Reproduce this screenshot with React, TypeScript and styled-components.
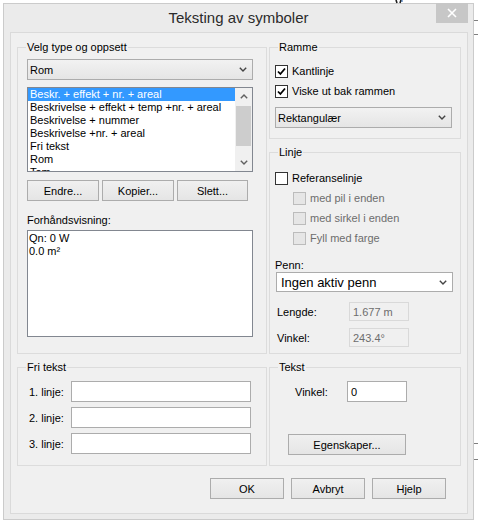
import React from 'react';
import styled, { createGlobalStyle } from 'styled-components';

const GlobalStyle = createGlobalStyle`
  html, body {
    margin: 0;
    padding: 0;
    background: #ffffff;
  }
  body {
    font-family: "Liberation Sans", Arial, sans-serif;
    font-size: 11px;
    color: #000;
  }
  * { box-sizing: border-box; }
`;

const Page = styled.div`
  position: relative;
  width: 478px;
  height: 520px;
  overflow: hidden;
  display: flex;
  align-items: flex-start;
  padding: 3px 0 0 3px;
`;

const BackGlyph = styled.svg`
  position: absolute;
  left: 394px;
  top: 0;
`;

const Window = styled.div`
  width: 471px;
  height: 517px;
  background: #ebebeb;
  border: 1px solid #cbcbcb;
  display: flex;
  flex-direction: column;
`;

const EdgeStrip = styled.div`
  flex: 1;
  display: flex;
  flex-direction: column;
`;

const EdgeTick = styled.div<{ $top: number }>`
  margin-top: ${p => p.$top}px;
  height: 1px;
  background: #7f7f7f;
`;

const TitleBar = styled.div`
  height: 28px;
  display: grid;
  grid-template-columns: 1fr auto 1fr;
  align-items: start;
`;

const Title = styled.div`
  grid-column: 2;
  font-size: 15px;
  line-height: 28px;
  color: #2b2b2b;
`;

const CloseButton = styled.div`
  grid-column: 3;
  justify-self: end;
  width: 32px;
  height: 20px;
  margin-top: -1px;
  margin-right: 5px;
  background: #c7c7c7;
  display: flex;
  align-items: center;
  justify-content: center;
`;

const Client = styled.div`
  margin: 0 5px 5px 6px;
  height: 482px;
  background: #f0f0f0;
  border: 1px solid #dadada;
  padding: 8px 6px 0 6px;
  display: grid;
  grid-template-columns: 250px 192px;
  grid-template-rows: 313px 105px auto;
  column-gap: 2px;
  row-gap: 7px;
`;

const Group = styled.fieldset<{ $h: number; $pt?: number }>`
  margin: 0;
  height: ${p => p.$h}px;
  border: 1px solid #dcdcdc;
  padding: ${p => p.$pt ?? 5}px 0 0 0;
  min-width: 0;
`;

const Legend = styled.legend`
  padding: 0 1px;
  margin-left: 8px;
  line-height: 13px;
  font-size: 11px;
`;

const Column = styled.div`
  display: flex;
  flex-direction: column;
  gap: 7px;
`;

const Stack = styled.div<{ $gap?: number; $pl?: number }>`
  display: flex;
  flex-direction: column;
  gap: ${p => p.$gap ?? 0}px;
  padding-left: ${p => p.$pl ?? 0}px;
`;

const Combo = styled.div<{ $white?: boolean; $w: number; $h?: number; $big?: boolean }>`
  width: ${p => p.$w}px;
  height: ${p => p.$h ?? 21}px;
  border: 1px solid #acacac;
  background: ${p => (p.$white ? '#ffffff' : 'linear-gradient(#f2f2f2, #e5e5e5)')};
  display: flex;
  align-items: center;
  justify-content: space-between;
  padding: 0 5px 0 ${p => (p.$big ? 4 : 2)}px;
  font-size: ${p => (p.$big ? 13 : 11)}px;
  flex-shrink: 0;
`;

const ListBox = styled.div`
  width: 226px;
  height: 85px;
  border: 1px solid #828790;
  background: #fff;
  display: flex;
  margin-top: 7px;
`;

const ListItems = styled.div`
  flex: 1;
  overflow: hidden;
`;

const ListItem = styled.div<{ $selected?: boolean }>`
  height: 13px;
  line-height: 13px;
  padding-left: 2px;
  white-space: nowrap;
  background: ${p => (p.$selected ? '#3399ff' : 'transparent')};
  color: ${p => (p.$selected ? '#fff' : '#000')};
`;

const ScrollBar = styled.div`
  width: 17px;
  background: #f0f0f0;
  display: flex;
  flex-direction: column;
  align-items: center;
`;

const ScrollArrow = styled.div`
  height: 17px;
  width: 17px;
  display: flex;
  align-items: center;
  justify-content: center;
`;

const ScrollThumb = styled.div`
  width: 15px;
  height: 40px;
  background: #cdcdcd;
  margin-top: 1px;
`;

const ScrollTrack = styled.div`
  flex: 1;
`;

const ButtonRow = styled.div<{ $gap: number }>`
  display: flex;
  gap: ${p => p.$gap}px;
`;

const Button = styled.div<{ $w: number }>`
  width: ${p => p.$w}px;
  height: 21px;
  border: 1px solid #acacac;
  background: linear-gradient(#f0f0f0, #e5e5e5);
  display: flex;
  align-items: center;
  justify-content: center;
  font-size: 11px;
`;

const Label = styled.div`
  line-height: 13px;
`;

const Preview = styled.div`
  width: 226px;
  height: 107px;
  border: 1px solid #828790;
  background: #fff;
  padding: 1px 1px;
  line-height: 13px;
`;

const FormRow = styled.div<{ $lw: number; $pl?: number }>`
  display: grid;
  grid-template-columns: ${p => p.$lw}px auto;
  align-items: center;
  padding-left: ${p => p.$pl ?? 0}px;
`;

const TextInput = styled.div<{ $w: number; $h?: number }>`
  width: ${p => p.$w}px;
  height: ${p => p.$h ?? 21}px;
  border: 1px solid #acacac;
  background: #fff;
  padding-left: 3px;
  display: flex;
  align-items: center;
`;

const ReadOnlyBox = styled.div`
  width: 60px;
  height: 19px;
  border: 1px solid #d9d9d9;
  background: #f0f0f0;
  color: #6d6d6d;
  padding-left: 3px;
  display: flex;
  align-items: center;
`;

const CheckRow = styled.div<{ $indent?: number; $disabled?: boolean }>`
  height: 20px;
  display: flex;
  align-items: center;
  gap: 4px;
  padding-left: ${p => p.$indent ?? 0}px;
  color: ${p => (p.$disabled ? '#6d6d6d' : '#000')};
`;

const Box = styled.div<{ $disabled?: boolean }>`
  width: 13px;
  height: 13px;
  border: 1px solid ${p => (p.$disabled ? '#bcbcbc' : '#333333')};
  background: ${p => (p.$disabled ? '#e6e6e6' : '#ffffff')};
  display: flex;
  align-items: center;
  justify-content: center;
`;

const Footer = styled.div`
  grid-column: 1 / span 2;
  display: flex;
  justify-content: flex-end;
  gap: 7px;
  padding-top: 5px;
  padding-right: 15px;
`;

const Chevron = ({ color = '#444' }: { color?: string }) => (
  <svg width="8" height="5" viewBox="0 0 8 5">
    <path d="M0.8 0.8 L4 4 L7.2 0.8" fill="none" stroke={color} strokeWidth="1.4" />
  </svg>
);

const ChevronUp = () => (
  <svg width="8" height="5" viewBox="0 0 8 5">
    <path d="M0.8 4.2 L4 1 L7.2 4.2" fill="none" stroke="#606060" strokeWidth="1.4" />
  </svg>
);

const Checkbox = ({ checked, disabled }: { checked?: boolean; disabled?: boolean }) => (
  <Box $disabled={disabled}>
    {checked && (
      <svg width="9" height="9" viewBox="0 0 9 9">
        <path d="M1 4.5 L3.4 7 L8 1.5" fill="none" stroke="#000" strokeWidth="1.8" />
      </svg>
    )}
  </Box>
);

const listItems = [
  'Beskr. + effekt + nr. + areal',
  'Beskrivelse + effekt + temp +nr. + areal',
  'Beskrivelse + nummer',
  'Beskrivelse +nr. + areal',
  'Fri tekst',
  'Rom',
  'Tom',
];

export default function App() {
  return (
    <Page>
      <GlobalStyle />
      <BackGlyph width="16" height="4" viewBox="0 0 16 4">
        <path d="M2 0 L3 3 M7 0 L6 3" stroke="#1d1d1d" strokeWidth="1.6" />
        <path d="M8 0 L8 2" stroke="#1f5fb0" strokeWidth="1" />
      </BackGlyph>
      <Window>
        <TitleBar>
          <Title>Teksting av symboler</Title>
          <CloseButton>
            <svg width="10" height="10" viewBox="0 0 10 10">
              <path d="M1 1 L9 9 M9 1 L1 9" stroke="#fff" strokeWidth="1.6" />
            </svg>
          </CloseButton>
        </TitleBar>
        <Client>
          <Group $h={313}>
            <Legend>Velg type og oppsett</Legend>
            <Stack $pl={9}>
              <Combo $w={226}>
                <span>Rom</span>
                <Chevron />
              </Combo>
              <ListBox>
                <ListItems>
                  {listItems.map((t, i) => (
                    <ListItem key={t} $selected={i === 0}>{t}</ListItem>
                  ))}
                </ListItems>
                <ScrollBar>
                  <ScrollArrow><ChevronUp /></ScrollArrow>
                  <ScrollThumb />
                  <ScrollTrack />
                  <ScrollArrow><Chevron color="#606060" /></ScrollArrow>
                </ScrollBar>
              </ListBox>
              <ButtonRow $gap={3} style={{ marginTop: 8 }}>
                <Button $w={72}>Endre...</Button>
                <Button $w={72}>Kopier...</Button>
                <Button $w={71}>Slett...</Button>
              </ButtonRow>
              <Label style={{ marginTop: 13 }}>Forhåndsvisning:</Label>
              <Preview style={{ marginTop: 3 }}>
                <div>Qn: 0 W</div>
                <div>0.0 m²</div>
              </Preview>
            </Stack>
          </Group>
          <Column>
            <Group $h={98} $pt={7}>
              <Legend>Ramme</Legend>
              <Stack $pl={5}>
                <CheckRow><Checkbox checked />Kantlinje</CheckRow>
                <CheckRow><Checkbox checked />Viske ut bak rammen</CheckRow>
                <Combo $w={177} style={{ marginTop: 6 }}>
                  <span>Rektangulær</span>
                  <Chevron />
                </Combo>
              </Stack>
            </Group>
            <Group $h={208} $pt={9}>
              <Legend>Linje</Legend>
              <Stack $pl={5}>
                <CheckRow><Checkbox />Referanselinje</CheckRow>
                <CheckRow $indent={18} $disabled><Checkbox disabled />med pil i enden</CheckRow>
                <CheckRow $indent={18} $disabled><Checkbox disabled />med sirkel i enden</CheckRow>
                <CheckRow $indent={18} $disabled><Checkbox disabled />Fyll med farge</CheckRow>
                <Label style={{ marginTop: 11 }}>Penn:</Label>
                <Combo $w={177} $h={20} $white $big style={{ marginLeft: 1 }}>
                  <span>Ingen aktiv penn</span>
                  <Chevron />
                </Combo>
                <Stack $gap={7} style={{ marginTop: 10 }}>
                  <FormRow $lw={72} $pl={2}>
                    <span>Lengde:</span>
                    <ReadOnlyBox>1.677 m</ReadOnlyBox>
                  </FormRow>
                  <FormRow $lw={72} $pl={2}>
                    <span>Vinkel:</span>
                    <ReadOnlyBox>243.4°</ReadOnlyBox>
                  </FormRow>
                </Stack>
              </Stack>
            </Group>
          </Column>
          <Group $h={105} $pt={7}>
            <Legend>Fri tekst</Legend>
            <Stack $gap={5} $pl={11}>
              <FormRow $lw={42}>
                <span>1. linje:</span>
                <TextInput $w={180} />
              </FormRow>
              <FormRow $lw={42}>
                <span>2. linje:</span>
                <TextInput $w={180} />
              </FormRow>
              <FormRow $lw={42}>
                <span>3. linje:</span>
                <TextInput $w={180} />
              </FormRow>
            </Stack>
          </Group>
          <Group $h={105} $pt={7}>
            <Legend>Tekst</Legend>
            <Stack $pl={25}>
              <FormRow $lw={52}>
                <span>Vinkel:</span>
                <TextInput $w={60}>0</TextInput>
              </FormRow>
              <Button $w={118} style={{ marginTop: 32, marginLeft: -7 }}>Egenskaper...</Button>
            </Stack>
          </Group>
          <Footer>
            <Button $w={74}>OK</Button>
            <Button $w={74}>Avbryt</Button>
            <Button $w={74}>Hjelp</Button>
          </Footer>
        </Client>
      </Window>
      <EdgeStrip>
        <EdgeTick $top={17} />
        <EdgeTick $top={13} />
        <EdgeTick $top={408} />
        <EdgeTick $top={15} />
      </EdgeStrip>
    </Page>
  );
}
